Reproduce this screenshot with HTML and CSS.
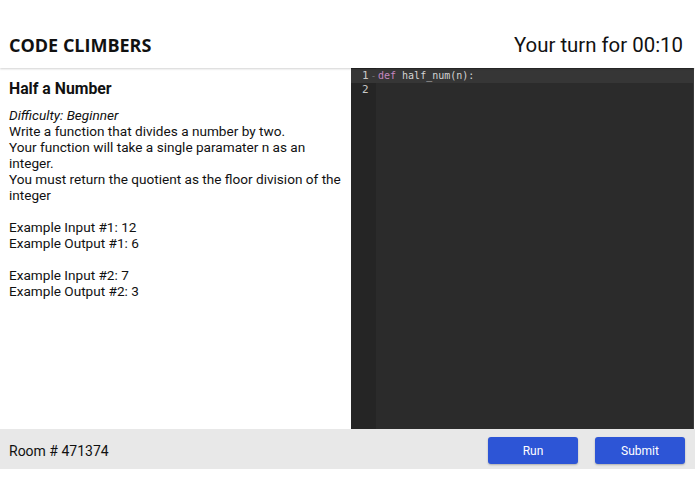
FILE: index.html
```html
<!DOCTYPE html>
<html>
<head>
<meta charset="utf-8">
<link rel="stylesheet" href="styles.css">
</head>
<body>
<div class="app">
  <header class="topbar">
    <div class="brand">CODE CLIMBERS</div>
    <div class="turn">Your turn for 00:10</div>
  </header>
  <main class="main">
    <section class="problem">
      <h1 class="title">Half a Number</h1>
      <p class="desc"><em>Difficulty: Beginner</em><br>Write a function that divides a number by two.<br>Your function will take a single paramater n as an integer.<br>You must return the quotient as the floor division of the integer</p>
      <p class="desc">Example Input #1: 12<br>Example Output #1: 6</p>
      <p class="desc">Example Input #2: 7<br>Example Output #2: 3</p>
    </section>
    <section class="editor">
      <div class="gutter">
        <div class="ln active">1<span class="fold">-</span></div>
        <div class="ln">2</div>
      </div>
      <div class="code">
        <div class="line active"><span class="kw">def</span> half_num(n):</div>
        <div class="line"></div>
      </div>
    </section>
  </main>
  <footer class="footer">
    <div class="room">Room # 471374</div>
    <div class="actions">
      <button class="btn">Run</button>
      <button class="btn">Submit</button>
    </div>
  </footer>
</div>
</body>
</html>
```
FILE: styles.css
```css
html, body {
  margin: 0;
  padding: 0;
  background: #fff;
}
body {
  font-family: Roboto, "Liberation Sans", sans-serif;
  color: #111;
}
.app {
  width: 695px;
  display: flex;
  flex-direction: column;
}
.topbar {
  height: 68px;
  display: flex;
  align-items: flex-end;
  justify-content: space-between;
  padding: 0 12px 12px 9px;
  box-sizing: border-box;
  box-shadow: 0 1px 2px rgba(0,0,0,0.18);
  position: relative;
  z-index: 1;
}
.brand {
  font-family: "Open Sans", sans-serif;
  font-weight: 700;
  font-size: 18px;
  line-height: 22px;
  color: #111;
}
.turn {
  font-size: 20.4px;
  line-height: 24px;
  color: #111;
  margin-bottom: -1px;
}
.main {
  display: flex;
  height: 361px;
}
.problem {
  width: 351px;
  box-sizing: border-box;
  padding: 11px 9px 0 9px;
  font-size: 13.6px;
  line-height: 16px;
}
.title {
  font-size: 15.8px;
  font-weight: 700;
  margin: 0 0 9px 0;
  line-height: 19px;
}
.desc {
  margin: 0 0 16px 0;
}
.editor {
  width: 342px;
  display: flex;
  background: #2b2b2b;
  border-right: 1px solid #3a3a3a;
  font-family: "DejaVu Sans Mono", monospace;
  font-size: 10px;
  line-height: 14px;
}
.gutter {
  width: 25px;
  background: #252525;
  color: #c8c8c8;
  padding-top: 1px;
  font-size: 11px;
}
.ln {
  height: 14px;
  padding-left: 11px;
  position: relative;
}
.ln.active {
  background: #363636;
}
.fold {
  color: #777;
  font-size: 9px;
  margin-left: 2px;
}
.code {
  flex: 1;
  padding-top: 1px;
  color: #d4d4d4;
}
.line {
  height: 14px;
  padding-left: 2px;
}
.line.active {
  background: #363636;
}
.kw {
  color: #c586c0;
}
.footer {
  height: 40px;
  background: #e8e8e8;
  display: flex;
  align-items: center;
  justify-content: space-between;
  padding: 0 10px 0 9px;
}
.room {
  font-size: 14px;
  padding-top: 4px;
}
.actions {
  display: flex;
  gap: 17px;
  padding-top: 3px;
}
.btn {
  width: 90px;
  height: 27px;
  background: #2d55d6;
  color: #fff;
  border: none;
  border-radius: 3px;
  font-family: Roboto, sans-serif;
  font-size: 12px;
  box-shadow: 0 1px 2px rgba(0,0,0,0.25);
}
```
